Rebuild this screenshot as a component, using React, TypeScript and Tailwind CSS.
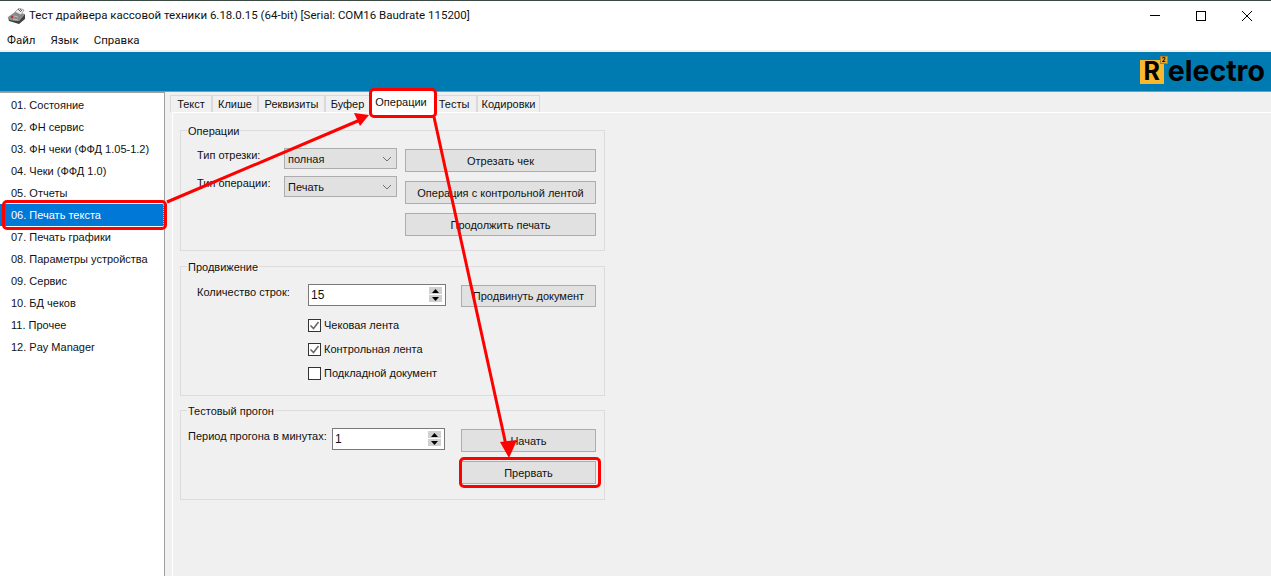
import type { ReactNode } from 'react';

const sideItems = [
  '01. Состояние',
  '02. ФН сервис',
  '03. ФН чеки (ФФД 1.05-1.2)',
  '04. Чеки (ФФД 1.0)',
  '05. Отчеты',
  '06. Печать текста',
  '07. Печать графики',
  '08. Параметры устройства',
  '09. Сервис',
  '10. БД чеков',
  '11. Прочее',
  '12. Pay Manager',
];

const tabs = [
  { label: 'Текст', width: 'w-[42px]' },
  { label: 'Клише', width: 'w-[46px]' },
  { label: 'Реквизиты', width: 'w-[67px]' },
  { label: 'Буфер', width: 'w-[45px]' },
  { label: 'Операции', width: 'w-[64px] pr-[2px]', active: true },
  { label: 'Тесты', width: 'w-[43px] pr-[3px]' },
  { label: 'Кодировки', width: 'w-[63px]' },
];

function Group({ title, className, children }: { title: string; className: string; children: ReactNode }) {
  return (
    <div className={`relative w-[425px] border border-[#dcdcdc] ${className}`}>
      <span className="absolute left-[6px] top-[-6px] bg-[#f0f0f0] px-[1px] leading-[13px]">{title}</span>
      {children}
    </div>
  );
}

function Btn({ children, className = '' }: { children: ReactNode; className?: string }) {
  return (
    <div className={`flex items-center justify-center border border-[#adadad] bg-[#e1e1e1] pt-[1px] ${className}`}>
      {children}
    </div>
  );
}

function Combo({ value }: { value: string }) {
  return (
    <div className="flex h-[21px] w-[113px] items-center justify-between border border-[#adadad] bg-[#e1e1e1] pl-[3px] pr-[3px] pt-[1px]">
      <span>{value}</span>
      <svg width="10" height="6" viewBox="0 0 10 6" fill="none" stroke="#707070" strokeWidth="1" className="mr-[1px]">
        <path d="M1 1l4 4 4-4" />
      </svg>
    </div>
  );
}

function Spin({ value, className }: { value: string; className: string }) {
  return (
    <div className={`flex h-[22px] items-center justify-between border border-[#7a7a7a] bg-white pb-[1px] pl-[2px] pr-[3px] text-[12px] ${className}`}>
      <span>{value}</span>
      <div className="flex flex-col gap-[1px]">
        <div className="flex h-[7px] w-[13px] items-center justify-center bg-[#d0d0d0]">
          <svg width="7" height="4" viewBox="0 0 7 4"><path d="M3.5 0L7 4H0z" fill="#000" /></svg>
        </div>
        <div className="flex h-[7px] w-[13px] items-center justify-center bg-[#d0d0d0]">
          <svg width="7" height="4" viewBox="0 0 7 4"><path d="M0 0h7L3.5 4z" fill="#000" /></svg>
        </div>
      </div>
    </div>
  );
}

function Check({ label, checked }: { label: string; checked?: boolean }) {
  return (
    <div className="flex h-[24px] items-start gap-[3px]">
      <div className="flex h-[13px] w-[13px] items-center justify-center border border-[#333] bg-white">
        {checked && (
          <svg width="11" height="11" viewBox="0 0 11 11" fill="none" stroke="#666" strokeWidth="1.5">
            <path d="M1.5 5.5l3 3 5-6.5" />
          </svg>
        )}
      </div>
      <span className="leading-[13px]">{label}</span>
    </div>
  );
}

function PrinterIcon() {
  return (
    <svg width="17" height="16" viewBox="0 0 17 16" className="shrink-0">
      <path d="M0 9l7-5 10 2-6 7-9-1z" fill="#8a8a8a" />
      <path d="M0 9l1 4 10 3 6-5v-5l-6 7-9-1z" fill="#3f3f3f" />
      <path d="M7 4l4-4 5 2-3 5z" fill="#ececec" stroke="#666" strokeWidth="0.5" />
      <path d="M10 1l3 3M12 1l2 2" stroke="#3a5fb0" strokeWidth="1" />
      <path d="M3 8h2v2H3z" fill="#d8262c" />
      <path d="M6 8l4 1M5 11l5 1" stroke="#d0d0d0" strokeWidth="0.7" />
    </svg>
  );
}

export default function App() {
  return (
    <div className="relative flex h-[576px] w-[1271px] flex-col overflow-hidden bg-[#f0f0f0] font-['Liberation_Sans',sans-serif] text-[11px] text-[#111]">
      {/* window chrome */}
      <div className="flex h-[31px] items-center border-t border-[#3c4a44] bg-white pb-[1px] pl-[8px]">
        <PrinterIcon />
        <span className="ml-[4px] font-['Roboto',sans-serif] text-[11.5px]">
          Тест драйвера кассовой техники 6.18.0.15 (64-bit) [Serial: COM16 Baudrate 115200]
        </span>
        <div className="ml-auto flex items-center">
          <div className="flex w-[46px] justify-center"><div className="h-[1px] w-[10px] bg-black" /></div>
          <div className="flex w-[46px] justify-center"><div className="h-[10px] w-[10px] border border-black" /></div>
          <div className="flex w-[46px] justify-center">
            <svg width="10" height="10" viewBox="0 0 10 10" stroke="#000" strokeWidth="1"><path d="M0 0l10 10M10 0L0 10" /></svg>
          </div>
          <div className="w-[1px]" />
        </div>
      </div>
      <div className="flex h-[19px] items-center gap-[15px] bg-white pl-[7px] font-['Roboto',sans-serif] text-[11.5px]">
        <span>Файл</span>
        <span>Язык</span>
        <span>Справка</span>
      </div>
      <div className="h-[2px] shrink-0 bg-[#f0f0f0]" />

      {/* blue banner */}
      <div className="flex h-[40px] shrink-0 items-center justify-end border-b border-[#6f9fb8] bg-[#007bb1] pr-[6px]">
        <div className="relative mr-[4px] mt-[1px] flex h-[24px] w-[24px] items-center justify-center border border-[#f5b638] bg-[#fbb82c] font-['Inter',sans-serif] text-[25px] font-bold text-black">
          R
          <div className="absolute right-[-5px] top-[-5px] flex h-[8px] w-[8px] items-center justify-center border border-[#a98223] bg-[#e0ab2e] text-[6px] leading-none">2</div>
        </div>
        <span className="font-['Inter',sans-serif] text-[28.5px] leading-none font-bold text-black">electro</span>
      </div>

      <div className="flex min-h-0 flex-1">
        {/* sidebar */}
        <div className="w-[165px] shrink-0 border-t border-r border-[#a0a0a0] bg-white pt-[1px]">
          {sideItems.map((item, i) => (
            <div
              key={item}
              className={
                i === 5
                  ? 'flex h-[22px] items-center border-r border-dotted border-[#f0b040] bg-[#0078d7] pl-[11px] text-white'
                  : 'flex h-[22px] items-center pl-[11px]'
              }
            >
              {item}
            </div>
          ))}
        </div>

        {/* tabs + panel */}
        <div className="flex min-w-0 flex-1 flex-col pl-[5px]">
          <div className="flex h-[20px] shrink-0 items-end">
            {tabs.map((tab) =>
              tab.active ? (
                <div key={tab.label} className={`relative z-10 mb-[-3px] flex h-[24px] items-center justify-center bg-white pb-[2px] ${tab.width}`}>
                  {tab.label}
                </div>
              ) : (
                <div key={tab.label} className={`flex h-[17px] items-center justify-center border border-b-0 border-[#d9d9d9] bg-[#f0f0f0] ${tab.width}`}>
                  {tab.label}
                </div>
              ),
            )}
          </div>
          <div className="ml-[2px] flex-1 border-t border-l border-white pl-[7px] pt-[17px]">
            <Group title="Операции" className="h-[121px]">
              <div className="flex justify-between pl-[16px] pr-[8px] pt-[17px]">
                <div className="flex flex-col gap-[7px]">
                  <div className="flex">
                    <span className="w-[87px] leading-[14px]">Тип отрезки:</span>
                    <Combo value="полная" />
                  </div>
                  <div className="flex">
                    <span className="w-[87px] leading-[14px]">Тип операции:</span>
                    <Combo value="Печать" />
                  </div>
                </div>
                <div className="mt-[1px] flex w-[191px] flex-col gap-[9px]">
                  <Btn className="h-[23px]">Отрезать чек</Btn>
                  <Btn className="h-[23px]">Операция с контрольной лентой</Btn>
                  <Btn className="h-[23px]">Продолжить печать</Btn>
                </div>
              </div>
            </Group>
            <Group title="Продвижение" className="mt-[15px] h-[130px]">
              <div className="pl-[16px] pt-[17px]">
                <div className="flex">
                  <span className="w-[111px] pt-[1px] leading-[14px]">Количество строк:</span>
                  <Spin value="15" className="w-[138px]" />
                  <Btn className="ml-[15px] mt-[1px] h-[22px] w-[135px]">Продвинуть документ</Btn>
                </div>
                <div className="ml-[111px] mt-[12px]">
                  <Check label="Чековая лента" checked />
                  <Check label="Контрольная лента" checked />
                  <Check label="Подкладной документ" />
                </div>
              </div>
            </Group>
            <Group title="Тестовый прогон" className="mt-[14px] h-[90px]">
              <div className="flex pl-[7px] pt-[17px]">
                <span className="w-[144px] pt-[1px] leading-[14px]">Период прогона в минутах:</span>
                <Spin value="1" className="w-[113px]" />
                <div className="ml-[16px] mt-[1px] flex w-[135px] flex-col gap-[9px]">
                  <Btn className="h-[23px]">Начать</Btn>
                  <Btn className="h-[23px]">Прервать</Btn>
                </div>
              </div>
            </Group>
          </div>
        </div>
      </div>

      {/* annotations */}
      <div className="pointer-events-none absolute left-[2px] top-[200px] z-20 h-[30px] w-[165px] rounded-[5px] border-[3px] border-[#f00]" />
      <div className="pointer-events-none absolute left-[369px] top-[88px] z-20 h-[30px] w-[68px] rounded-[5px] border-[3px] border-[#f00]" />
      <div className="pointer-events-none absolute left-[459px] top-[457px] z-20 h-[31px] w-[142px] rounded-[5px] border-[3px] border-[#f00]" />
      <svg className="pointer-events-none absolute left-0 top-0 z-20" width="1271" height="576" viewBox="0 0 1271 576">
        <path d="M167 202L360 120" stroke="#f00" strokeWidth="3" fill="none" />
        <path d="M369 115L354 113L360 126z" fill="#f00" />
        <path d="M434 117L506 445" stroke="#f00" strokeWidth="3" fill="none" />
        <path d="M509 458L500 442L517 440z" fill="#f00" />
      </svg>
    </div>
  );
}
